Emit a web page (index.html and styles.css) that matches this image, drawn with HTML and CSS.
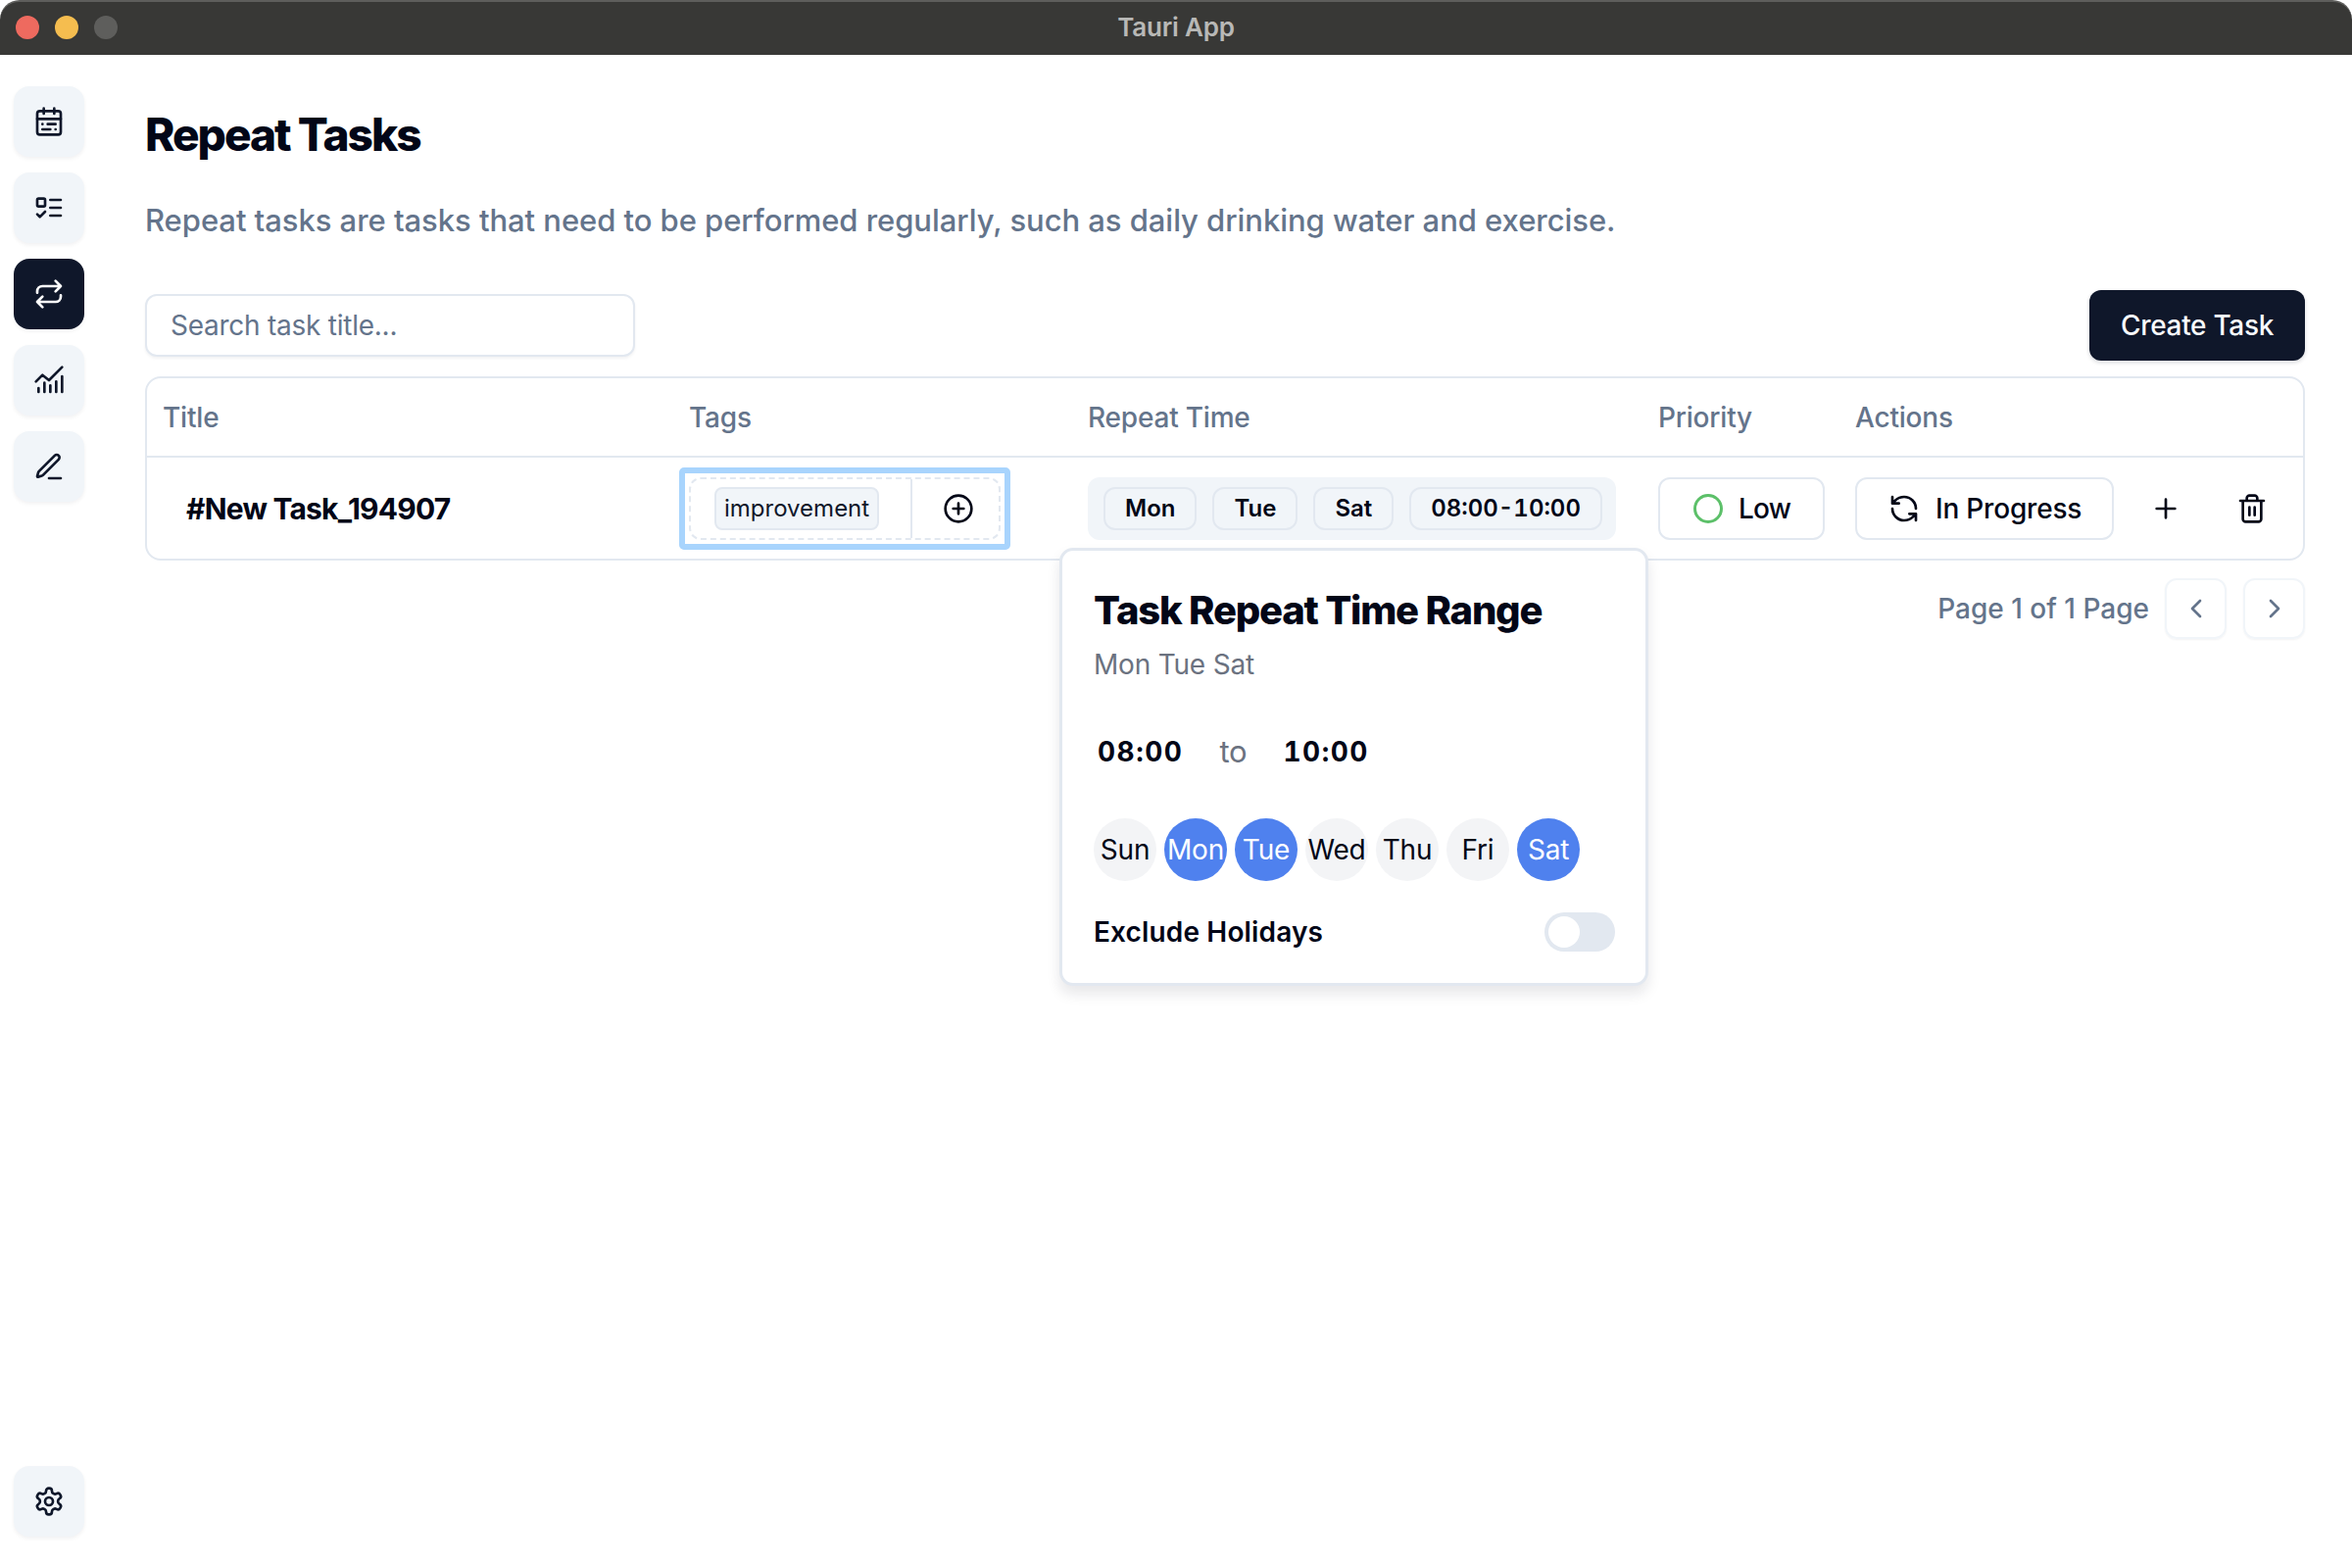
FILE: index.html
```html
<!DOCTYPE html>
<html lang="en">

<head>
    <meta charset="UTF-8">
    <title>Tauri App</title>
    <link rel="stylesheet" href="styles.css">
</head>

<body>
    <div class="titlebar">
        <div class="lights">
            <span class="light red"></span>
            <span class="light yellow"></span>
            <span class="light grey"></span>
        </div>
        <div class="app-name">Tauri App</div>
    </div>

    <div class="layout">
        <nav class="sidebar">
            <a class="nav-btn">
                <svg class="icon" viewBox="0 0 24 24"><rect x="3" y="4" width="18" height="18" rx="2"/><path d="M16 2v4M3 10h18M8 2v4M17 14h-6M13 18H7M7 14h.01M17 18h.01"/></svg>
            </a>
            <a class="nav-btn">
                <svg class="icon" viewBox="0 0 24 24"><rect x="3" y="5" width="6" height="6" rx="1"/><path d="m3 17 2 2 4-4M13 6h8M13 12h8M13 18h8"/></svg>
            </a>
            <a class="nav-btn active">
                <svg class="icon" viewBox="0 0 24 24"><path d="m17 2 4 4-4 4M3 11v-1a4 4 0 0 1 4-4h14M7 22l-4-4 4-4M21 13v1a4 4 0 0 1-4 4H3"/></svg>
            </a>
            <a class="nav-btn">
                <svg class="icon" viewBox="0 0 24 24"><path d="m2 13 5-5 5 4 10-10M4 21v-3M8.500 21v-7M13 21v-5M17.500 21v-8M22 21V9"/></svg>
            </a>
            <a class="nav-btn">
                <svg class="icon" viewBox="0 0 24 24"><path d="M12 21h9M16.376 3.622a1 1 0 0 1 3.002 3.002L7.368 18.635a2 2 0 0 1-.855.506l-2.872.838a.5.5 0 0 1-.62-.62l.838-2.872a2 2 0 0 1 .506-.854z"/></svg>
            </a>
            <a class="nav-btn settings">
                <svg class="icon" viewBox="0 0 24 24"><path d="M12.220 2h-.44a2 2 0 0 0-2 2v.18a2 2 0 0 1-1 1.730l-.43.25a2 2 0 0 1-2 0l-.15-.08a2 2 0 0 0-2.730.73l-.22.38a2 2 0 0 0 .73 2.730l.15.1a2 2 0 0 1 1 1.720v.51a2 2 0 0 1-1 1.740l-.15.09a2 2 0 0 0-.73 2.730l.22.38a2 2 0 0 0 2.730.73l.15-.08a2 2 0 0 1 2 0l.43.25a2 2 0 0 1 1 1.730V20a2 2 0 0 0 2 2h.44a2 2 0 0 0 2-2v-.18a2 2 0 0 1 1-1.730l.43-.25a2 2 0 0 1 2 0l.15.08a2 2 0 0 0 2.730-.73l.22-.39a2 2 0 0 0-.73-2.730l-.15-.08a2 2 0 0 1-1-1.740v-.5a2 2 0 0 1 1-1.740l.15-.09a2 2 0 0 0 .73-2.730l-.22-.38a2 2 0 0 0-2.730-.73l-.15.08a2 2 0 0 1-2 0l-.43-.25a2 2 0 0 1-1-1.730V4a2 2 0 0 0-2-2z"/><circle cx="12" cy="12" r="3"/></svg>
            </a>
        </nav>

        <main class="content">
            <h1>Repeat Tasks</h1>
            <p class="intro">Repeat tasks are tasks that need to be performed regularly, such as daily drinking water and exercise.</p>

            <div class="toolbar">
                <input class="search" type="text" placeholder="Search task title...">
                <button class="create-btn">Create Task</button>
            </div>

            <div class="table-wrap">
                <table>
                    <colgroup>
                        <col class="col-title">
                        <col class="col-tags">
                        <col class="col-time">
                        <col class="col-priority">
                        <col>
                    </colgroup>
                    <thead>
                        <tr>
                            <th>Title</th>
                            <th>Tags</th>
                            <th>Repeat Time</th>
                            <th>Priority</th>
                            <th>Actions</th>
                        </tr>
                    </thead>
                    <tbody>
                        <tr>
                            <td class="task-title">#New Task_194907</td>
                            <td>
                                <div class="tag-focus">
                                    <div class="tag-box">
                                        <div class="tag-list"><span class="tag">improvement</span></div>
                                        <div class="tag-add">
                                            <svg class="icon small" viewBox="0 0 24 24"><circle cx="12" cy="12" r="10"/><path d="M8 12h8M12 8v8"/></svg>
                                        </div>
                                    </div>
                                </div>
                            </td>
                            <td>
                                <div class="time-anchor">
                                    <div class="time-chips">
                                        <span class="chip">Mon</span>
                                        <span class="chip">Tue</span>
                                        <span class="chip">Sat</span>
                                        <span class="chip">08:00-10:00</span>
                                    </div>
                                    <div class="popover">
                                        <h2>Task Repeat Time Range</h2>
                                        <div class="pop-days">Mon Tue Sat</div>
                                        <div class="pop-time">
                                            <span class="clock">08:00</span>
                                            <span class="to">to</span>
                                            <span class="clock">10:00</span>
                                        </div>
                                        <div class="day-row">
                                            <span class="day">Sun</span>
                                            <span class="day on">Mon</span>
                                            <span class="day on">Tue</span>
                                            <span class="day">Wed</span>
                                            <span class="day">Thu</span>
                                            <span class="day">Fri</span>
                                            <span class="day on">Sat</span>
                                        </div>
                                        <div class="holiday-row">
                                            <span>Exclude Holidays</span>
                                            <span class="toggle"><span class="knob"></span></span>
                                        </div>
                                    </div>
                                </div>
                            </td>
                            <td>
                                <div class="outline-btn priority">
                                    <span class="ring"></span>
                                    <span class="low">Low</span>
                                </div>
                            </td>
                            <td>
                                <div class="actions">
                                    <div class="outline-btn status">
                                        <svg class="icon" viewBox="0 0 24 24"><path d="M21 12a9 9 0 0 0-9-9 9.750 9.750 0 0 0-6.740 2.740L3 8M3 3v5h5M3 12a9 9 0 0 0 9 9 9.750 9.750 0 0 0 6.740-2.740L21 16M16 16h5v5"/></svg>
                                        <span>In Progress</span>
                                    </div>
                                    <svg class="icon act-plus" viewBox="0 0 24 24"><path d="M5 12h14M12 5v14"/></svg>
                                    <svg class="icon act-trash" viewBox="0 0 24 24"><path d="M3 6h18M19 6v14c0 1-1 2-2 2H7c-1 0-2-1-2-2V6M8 6V4c0-1 1-2 2-2h4c1 0 2 1 2 2v2M10 11v6M14 11v6"/></svg>
                                </div>
                            </td>
                        </tr>
                    </tbody>
                </table>
            </div>

            <div class="pager">
                <span class="page-text">Page 1 of 1 Page</span>
                <span class="page-btn">
                    <svg class="icon small" viewBox="0 0 24 24"><path d="m15 18-6-6 6-6"/></svg>
                </span>
                <span class="page-btn">
                    <svg class="icon small" viewBox="0 0 24 24"><path d="m9 18 6-6-6-6"/></svg>
                </span>
            </div>
        </main>
    </div>
</body>

</html>
```

FILE: styles.css
```css
* {
    box-sizing: border-box;
}

html,
body {
    height: 100%;
}

body {
    margin: 0;
    font-family: Inter, 'Noto Sans', sans-serif;
    letter-spacing: -0.2px;
    background: #fff;
    color: #020617;
    display: flex;
    flex-direction: column;
}

.titlebar {
    flex: none;
    height: 56px;
    background: #383836;
    border-radius: 20px 20px 0 0;
    border-top: 2px solid #5e5e5c;
    display: flex;
    align-items: center;
    justify-content: center;
    position: relative;
}

.lights {
    position: absolute;
    left: 16px;
    top: 14px;
    display: flex;
    gap: 16px;
}

.light {
    width: 24px;
    height: 24px;
    border-radius: 50%;
}

.red {
    background: #ee6a5f;
}

.yellow {
    background: #f5bd4f;
}

.grey {
    background: #5e5e5c;
}

.app-name {
    color: #b8b8b6;
    font-size: 26px;
    font-weight: 600;
    margin-top: -3px;
}

.layout {
    flex: 1;
    display: flex;
    min-height: 0;
}

.sidebar {
    flex: none;
    width: 100px;
    padding: 32px 14px;
    display: flex;
    flex-direction: column;
    gap: 16px;
}

.nav-btn {
    width: 72px;
    height: 72px;
    border-radius: 16px;
    background: #f1f5f9;
    box-shadow: 0 2px 4px rgba(15, 23, 42, 0.06);
    color: #0f172a;
    display: flex;
    align-items: center;
    justify-content: center;
}

.nav-btn.active {
    background: #0f172a;
    color: #fff;
}

.nav-btn.settings {
    margin-top: auto;
}

.icon {
    width: 32px;
    height: 32px;
    fill: none;
    stroke: currentColor;
    stroke-width: 2;
    stroke-linecap: round;
    stroke-linejoin: round;
    flex: none;
}

.content {
    flex: 1;
    min-width: 0;
    padding: 0 48px;
}

h1 {
    margin: 55px 0 0;
    font-size: 46px;
    line-height: 52px;
    font-weight: 800;
    letter-spacing: -2px;
}

.intro {
    margin: 42px 0 0;
    font-size: 31px;
    line-height: 40px;
    font-weight: 500;
    letter-spacing: -0.05px;
    color: #64748b;
}

.toolbar {
    margin-top: 51px;
    height: 72px;
    display: flex;
    align-items: center;
    justify-content: space-between;
}

.search {
    width: 500px;
    height: 64px;
    padding: 0 24px;
    border: 2px solid #e2e8f0;
    border-radius: 12px;
    box-shadow: 0 2px 3px rgba(15, 23, 42, 0.05);
    font-family: inherit;
    font-size: 28px;
    letter-spacing: -0.25px;
    outline: none;
}

.search::placeholder {
    color: #64748b;
    opacity: 1;
}

.create-btn {
    width: 220px;
    height: 72px;
    border: none;
    border-radius: 12px;
    background: #0f172a;
    color: #f8fafc;
    font-family: inherit;
    font-size: 28px;
    font-weight: 500;
    letter-spacing: -0.3px;
    box-shadow: 0 2px 4px rgba(15, 23, 42, 0.15);
}

.table-wrap {
    margin-top: 16px;
    border: 2px solid #e2e8f0;
    border-radius: 16px;
}

table {
    width: 100%;
    table-layout: fixed;
    border-collapse: collapse;
}

.col-title {
    width: 537px;
}

.col-tags {
    width: 407px;
}

.col-time {
    width: 582px;
}

.col-priority {
    width: 201px;
}

th {
    height: 80px;
    padding: 0 16px;
    text-align: left;
    font-size: 28px;
    font-weight: 500;
    color: #64748b;
    border-bottom: 2px solid #e2e8f0;
}

td {
    height: 104px;
    padding: 0 16px;
    vertical-align: middle;
}

.task-title {
    padding-left: 40px;
    font-size: 30px;
    font-weight: 700;
    letter-spacing: -0.8px;
}

.tag-focus {
    width: 338px;
    height: 84px;
    margin-left: -10px;
    padding: 4px;
    border: 6px solid #a8d4fd;
    border-radius: 5px;
}

.tag-box {
    height: 100%;
    border: 2px dashed #e2e8f0;
    border-radius: 12px;
    display: flex;
}

.tag-list {
    flex: 1;
    padding-left: 24px;
    display: flex;
    align-items: center;
    border-right: 2px solid #e2e8f0;
}

.tag {
    height: 44px;
    padding: 0 8px;
    display: flex;
    align-items: center;
    background: #f1f5f9;
    border: 2px solid #e2e8f0;
    border-radius: 8px;
    font-size: 24px;
    letter-spacing: 0;
    color: #0f172a;
}

.tag-add {
    flex: none;
    width: 88px;
    padding-left: 6px;
    display: flex;
    align-items: center;
    justify-content: center;
}

.time-anchor {
    position: relative;
}

.time-chips {
    width: 539px;
    height: 64px;
    padding: 0 16px;
    display: flex;
    align-items: center;
    gap: 16px;
    background: #f1f5f9;
    border-radius: 12px;
}

.chip {
    flex: none;
    height: 44px;
    padding: 0 20px;
    display: flex;
    align-items: center;
    border: 2px solid #e2e8f0;
    border-radius: 12px;
    font-size: 24px;
    font-weight: 600;
    letter-spacing: 0;
    white-space: nowrap;
    font-variant-numeric: tabular-nums;
}

.popover {
    position: absolute;
    left: -29px;
    top: 72px;
    width: 601px;
    height: 447px;
    padding: 36px 31px 0 32px;
    background: #fff;
    border: 3px solid #e2e8f0;
    border-radius: 14px;
    box-shadow: 0 8px 14px rgba(15, 23, 42, 0.1);
    z-index: 10;
}

.popover h2 {
    margin: 0;
    font-size: 40px;
    line-height: 50px;
    font-weight: 800;
    letter-spacing: -1.2px;
}

.pop-days {
    margin-top: 13px;
    font-size: 28px;
    line-height: 34px;
    font-weight: 400;
    color: #6b7280;
}

.pop-time {
    margin-top: 52px;
    padding-left: 4px;
    display: flex;
    align-items: center;
    gap: 37px;
    height: 40px;
}

.clock {
    font-size: 28px;
    font-weight: 700;
    letter-spacing: 1.5px;
    font-variant-numeric: tabular-nums;
}

.to {
    font-size: 31px;
    color: #6b7280;
}

.day-row {
    margin-top: 48px;
    display: flex;
    gap: 8px;
}

.day {
    width: 64px;
    height: 64px;
    border-radius: 50%;
    background: #f3f4f6;
    font-size: 28px;
    display: flex;
    align-items: center;
    justify-content: center;
}

.day.on {
    background: #4f81ee;
    color: #fff;
}

.holiday-row {
    margin-top: 32px;
    display: flex;
    align-items: center;
    justify-content: space-between;
    font-size: 28px;
    font-weight: 600;
    letter-spacing: 0.15px;
}

.toggle {
    width: 72px;
    height: 40px;
    padding: 4px;
    border-radius: 20px;
    background: #e2e8f0;
    display: block;
}

.knob {
    display: block;
    width: 32px;
    height: 32px;
    border-radius: 50%;
    background: #fff;
}

.outline-btn {
    height: 64px;
    border: 2px solid #e2e8f0;
    border-radius: 12px;
    display: flex;
    align-items: center;
    font-size: 28px;
    font-weight: 500;
}

.priority {
    width: 170px;
    padding-left: 34px;
    gap: 16px;
}

.low {
    letter-spacing: -0.8px;
}

.ring {
    width: 30px;
    height: 30px;
    border: 3px solid #5cc069;
    border-radius: 50%;
}

.actions {
    display: flex;
    align-items: center;
}

.status {
    width: 264px;
    padding-left: 32px;
    gap: 16px;
}

.act-plus {
    margin-left: 37px;
}

.act-trash {
    margin-left: 56px;
}

.pager {
    margin-top: 18px;
    display: flex;
    align-items: center;
    justify-content: flex-end;
}

.page-text {
    font-size: 28px;
    font-weight: 500;
    letter-spacing: 0;
    color: #64748b;
    margin-right: 16px;
}

.page-btn {
    width: 63px;
    height: 62px;
    border: 2px solid #f1f5f9;
    border-radius: 12px;
    color: #64748b;
    display: flex;
    align-items: center;
    justify-content: center;
    box-shadow: 0 1px 2px rgba(15, 23, 42, 0.05);
}

.page-btn + .page-btn {
    margin-left: 17px;
}
```
